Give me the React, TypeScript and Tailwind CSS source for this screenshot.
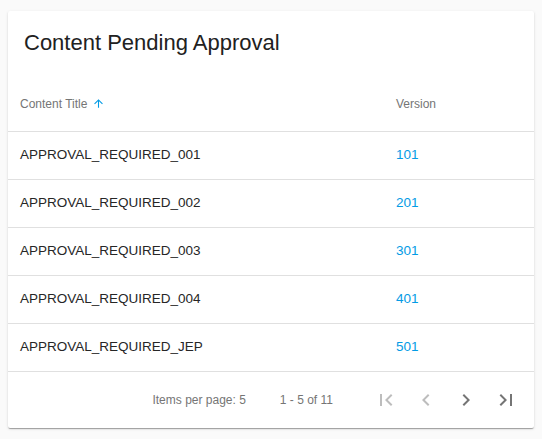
const rows = [
  { title: 'APPROVAL_REQUIRED_001', version: '101' },
  { title: 'APPROVAL_REQUIRED_002', version: '201' },
  { title: 'APPROVAL_REQUIRED_003', version: '301' },
  { title: 'APPROVAL_REQUIRED_004', version: '401' },
  { title: 'APPROVAL_REQUIRED_JEP', version: '501' },
];

const PagerIcon = ({ d, disabled }: { d: string; disabled?: boolean }) => (
  <button
    className={`w-10 h-10 flex items-center justify-center ${
      disabled ? 'text-[#bdbdbd]' : 'text-[#757575]'
    }`}>
    <svg viewBox="0 0 24 24" className="w-6 h-6" fill="currentColor">
      <path d={d} />
    </svg>
  </button>
);

export default function App() {
  return (
    <div
      className="min-h-screen bg-[#fafafa] px-2 pt-[11px]"
      style={{ fontFamily: '"Liberation Sans", Arial, sans-serif' }}>
      <div className="bg-white rounded-[2px] shadow-[0_2px_1px_-1px_rgba(0,0,0,0.2),0_1px_1px_0_rgba(0,0,0,0.14),0_1px_3px_0_rgba(0,0,0,0.12)]">
        <div className="px-4 pt-4 h-[65px]">
          <h2 className="text-[22px] leading-8 text-[#212121]">
            Content Pending Approval
          </h2>
        </div>
        <div className="grid grid-cols-[388px_1fr] h-14 items-center border-b border-[#e0e0e0] text-[12px] text-[#757575]">
          <div className="pl-3 flex items-center">
            Content Title
            <svg viewBox="0 0 24 24" className="ml-[5px] w-[13px] h-[13px] text-[#039be5]" fill="currentColor">
              <path d="M4 12l1.41 1.41L11 7.83V20h2V7.83l5.58 5.59L20 12l-8-8-8 8z" />
            </svg>
          </div>
          <div>Version</div>
        </div>
        {rows.map((r) => (
          <div
            key={r.title}
            className="grid grid-cols-[388px_1fr] h-12 items-center border-b border-[#e0e0e0] text-[13.5px]">
            <div className="pl-3 text-[#262626]">{r.title}</div>
            <div className="text-[#039be5]">{r.version}</div>
          </div>
        ))}
        <div className="h-14 flex items-center justify-end pr-2 text-[12px] text-[#757575]">
          <span>Items per page: 5</span>
          <span className="ml-[34px] mr-[33px]">1 - 5 of 11</span>
          <PagerIcon disabled d="M18.41 16.59L13.82 12l4.59-4.59L17 6l-6 6 6 6zM6 6h2v12H6z" />
          <PagerIcon disabled d="M15.41 7.41L14 6l-6 6 6 6 1.41-1.41L10.83 12z" />
          <PagerIcon d="M10 6L8.59 7.41 13.17 12l-4.58 4.59L10 18l6-6z" />
          <PagerIcon d="M5.59 7.41L10.18 12l-4.59 4.59L7 18l6-6-6-6zM16 6h2v12h-2z" />
        </div>
      </div>
    </div>
  );
}
